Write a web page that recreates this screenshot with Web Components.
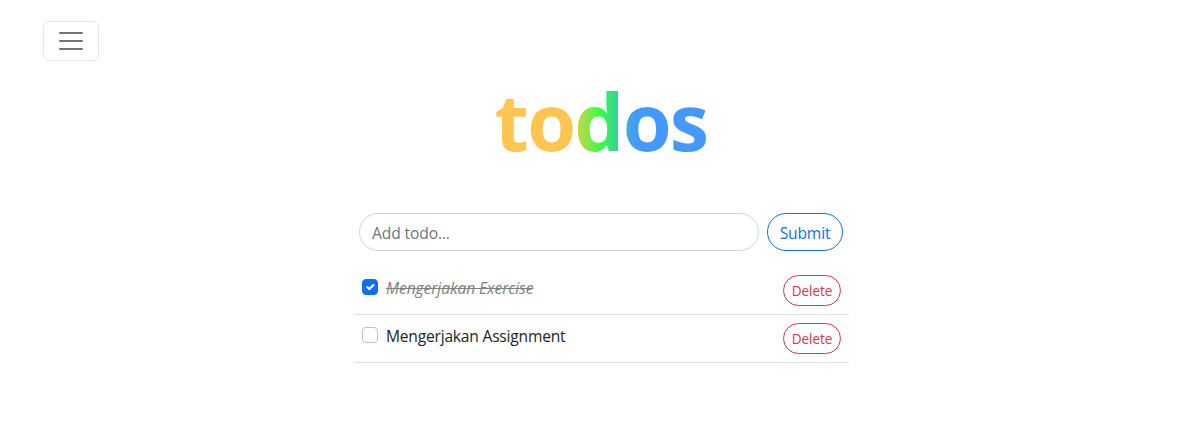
<!DOCTYPE html>
<html lang="id">
<head>
<meta charset="utf-8">
<title>todos</title>
<style>
body{margin:0;background:#fff;font-family:"Open Sans","Noto Sans",sans-serif;font-size:15.6px;line-height:24px;color:#212529;--ls-item:-.21px;--ls-input:-.12px;--ls-submit:-.14px;--ls-delete:-.1px}
</style>
</head>
<body>
<todo-app></todo-app>
<script>
const define = (name, html, setup) => customElements.define(name, class extends HTMLElement {
  constructor() {
    super();
    this.attachShadow({mode: "open"}).innerHTML = "<style>*{box-sizing:border-box}</style>" + html;
  }
  connectedCallback() { if (setup) setup(this, this.shadowRoot); }
});

define("menu-toggle", `<style>
:host{display:block;width:56px;height:40px}
button{display:flex;align-items:center;justify-content:center;width:56px;height:40px;padding:0;background:none;border:1px solid rgba(0,0,0,.1);border-radius:6px}
svg{display:block;width:30px;height:30px}
</style>
<button aria-label="Menu"><svg viewBox="0 0 30 30"><path stroke="rgba(0,0,0,.55)" stroke-linecap="round" stroke-miterlimit="10" stroke-width="2" d="M4 7h22M4 15h22M4 23h22"/></svg></button>`);

define("app-title", `<style>
:host{display:block;width:496px;height:96px}
h1{margin:0;text-align:center;font:700 79px/94px "Open Sans",sans-serif;letter-spacing:-1.7px;color:transparent;
background:linear-gradient(90deg,#ffc550 216px,#3f4 248px,#49f 282px);-webkit-background-clip:text;background-clip:text}
</style><h1><slot></slot></h1>`);

define("todo-form", `<style>
:host{display:flex;gap:8px;padding:0 6px}
input{flex:1;min-width:0;height:38px;padding:1px 12px 0;border:1px solid #ced4da;border-radius:19px;font:inherit;letter-spacing:var(--ls-input,0);background:#fff;color:#212529}
input::placeholder{color:#6c757d;opacity:1}
button{width:76px;height:38px;padding:2px 0 0;border:1px solid #0d6efd;border-radius:19px;background:none;color:#0d6efd;font:inherit;letter-spacing:var(--ls-submit,0)}
</style><input placeholder="Add todo..."><button><slot></slot></button>`);

define("check-box", `<style>
:host{display:block;width:16px;height:16px;border:1px solid #bfbfbf;border-radius:4px;box-sizing:border-box}
:host([checked]){background:#0d6efd;border-color:#0d6efd}
svg{display:none;width:14px;height:14px}
:host([checked]) svg{display:block}
</style><svg viewBox="0 0 20 20"><path fill="none" stroke="#fff" stroke-linecap="round" stroke-linejoin="round" stroke-width="3" d="m6 10 3 3 6-6"/></svg>`);

define("todo-item", `<style>
:host{display:flex;height:48px;padding:8px 8px 0;border-bottom:1px solid #dee2e6;box-sizing:border-box}
check-box{margin:4px 8px 0 0}
span{flex:1;padding-top:1px;letter-spacing:var(--ls-item,0)}
:host([done]) span{font-style:italic;text-decoration:line-through;color:#808080;letter-spacing:-.08px}
button{width:58px;height:31px;padding:1px 0 0;border:1px solid #dc3545;border-radius:16px;background:none;color:#dc3545;font:inherit;font-size:13.6px;letter-spacing:var(--ls-delete,0)}
</style><check-box></check-box><span><slot></slot></span><button>Delete</button>`,
(host, root) => root.querySelector("check-box").toggleAttribute("checked", host.hasAttribute("done")));

define("todo-app", `<style>
:host{display:block;height:437px;overflow:hidden;padding-top:21px}
menu-toggle{margin-left:43px}
main{width:496px;margin:13px 0 0 353px}
todo-form{margin-top:43px}
section{margin:16px 0 0 1px}
</style>
<menu-toggle></menu-toggle>
<main><app-title>todos</app-title>
<todo-form>Submit</todo-form>
<section><todo-item done>Mengerjakan Exercise</todo-item><todo-item>Mengerjakan Assignment</todo-item></section></main>`);
</script>
</body>
</html>
